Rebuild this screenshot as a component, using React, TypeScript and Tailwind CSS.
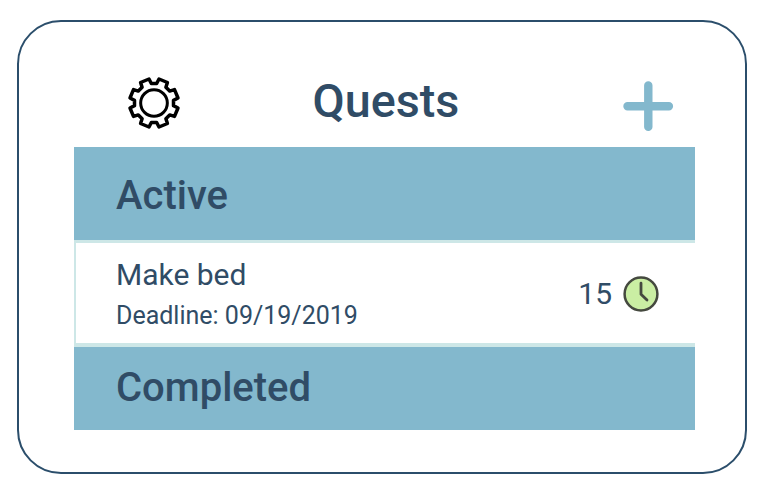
const teeth = [0, 45, 90, 135, 180, 225, 270, 315]
  .flatMap((deg) => {
    const a = (deg * Math.PI) / 180;
    return [[-15, -72], [-8, -58.5], [8, -58.5], [15, -72]].map(
      ([x, y]) =>
        `${(x * Math.cos(a) - y * Math.sin(a)).toFixed(2)},${(x * Math.sin(a) + y * Math.cos(a)).toFixed(2)}`,
    );
  })
  .join(" ");

function GearIcon() {
  return (
    <svg className="block h-[54px] w-[54px]" viewBox="-81 -81 162 162" fill="none" stroke="#000" strokeLinejoin="round">
      <polygon points={teeth} strokeWidth="10.5" />
      <circle r="40" strokeWidth="9" />
    </svg>
  );
}

function PlusIcon() {
  return (
    <svg className="block h-[52px] w-[52px]" viewBox="0 0 52 52" stroke="#83b8cd" strokeWidth="8.4" strokeLinecap="round">
      <path d="M26.3 5.5V46.9M5.5 26.3H46.9" />
    </svg>
  );
}

function ClockIcon() {
  return (
    <svg className="block h-9 w-9" viewBox="0 0 36 36" fill="none" stroke="#45493f" strokeLinecap="round" strokeLinejoin="round">
      <circle cx="18" cy="18" r="16.4" fill="#caeea3" strokeWidth="2.5" />
      <path d="M18 7.2V18.2L24 24.1" strokeWidth="2.8" />
    </svg>
  );
}

export default function App() {
  return (
    <div className="h-[490px] w-[762px] overflow-hidden bg-white pl-[17px] pt-[19.5px] font-['Roboto',sans-serif] text-[#304c66]">
      <main className="h-[454.5px] w-[730px] rounded-[44px] border-2 border-[#2b4e6b] pl-[55px] pt-[48.5px]">
        <header className="flex h-[76.5px] w-[621px] items-start pl-[53px] pr-[21px]">
          <div className="pt-[6px]"><GearIcon /></div>
          <h1 className="ml-[131.5px] mt-[3px] whitespace-nowrap text-[46.7px] font-medium leading-[56px]">Quests</h1>
          <button className="ml-auto mt-[10px]" aria-label="Add quest"><PlusIcon /></button>
        </header>
        <section className="w-[620.5px]">
          <h2 className="h-[93px] bg-[#83b8cd] pl-[42px] text-[40px] font-medium leading-[98px]">Active</h2>
          <div className="flex h-[107px] justify-between border-b-4 border-l-2 border-t-3 border-[#cde7e7] pl-[40px] pr-[35.5px]">
            <div className="pt-[13px]">
              <h3 className="w-max text-[30px] leading-[38px]">Make bed</h3>
              <p className="mt-[4px] w-max text-[25px] leading-[36px]">Deadline: 09/19/2019</p>
            </div>
            <div className="flex items-center gap-[11px] pt-[1px]">
              <span className="text-[30px]">15</span>
              <div className="pt-[2px]"><ClockIcon /></div>
            </div>
          </div>
          <h2 className="h-[83px] bg-[#83b8cd] pl-[42px] text-[40px] font-medium leading-[82px]">Completed</h2>
        </section>
      </main>
    </div>
  );
}
